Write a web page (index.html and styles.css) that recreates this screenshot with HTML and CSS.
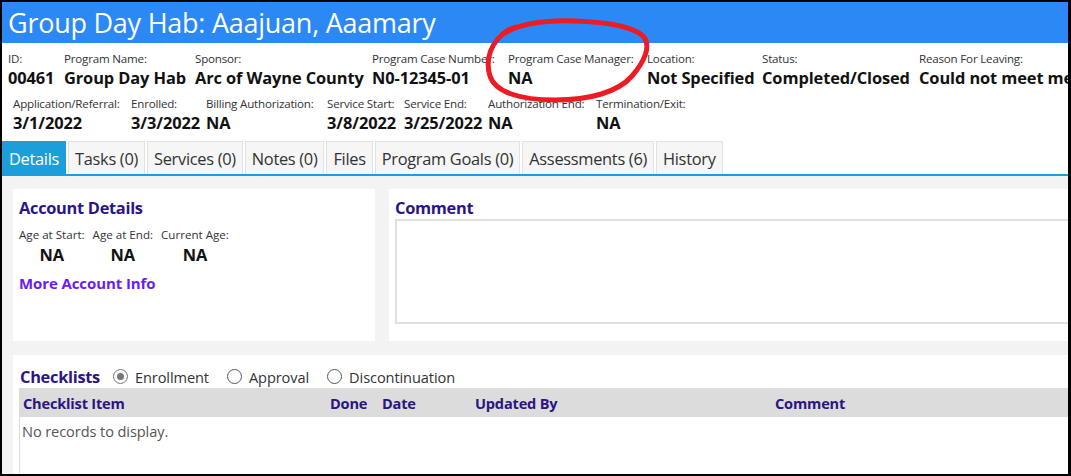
FILE: index.html
```html
<!DOCTYPE html>
<html lang="en">
<head>
<meta charset="utf-8">
<title>Group Day Hab: Aaajuan, Aaamary</title>
<link rel="stylesheet" href="styles.css">
</head>
<body>
<div class="frame">
  <header class="titlebar">
    <h1>Group Day Hab: Aaajuan, Aaamary</h1>
  </header>

  <section class="summary">
    <div class="fields row-a">
      <div class="field"><span class="lbl">ID:</span><span class="val">00461</span></div>
      <div class="field"><span class="lbl">Program Name:</span><span class="val">Group Day Hab</span></div>
      <div class="field"><span class="lbl">Sponsor:</span><span class="val">Arc of Wayne County</span></div>
      <div class="field"><span class="lbl">Program Case Number:</span><span class="val">N0-12345-01</span></div>
      <div class="field"><span class="lbl">Program Case Manager:</span><span class="val">NA</span></div>
      <div class="field"><span class="lbl">Location:</span><span class="val">Not Specified</span></div>
      <div class="field"><span class="lbl">Status:</span><span class="val">Completed/Closed</span></div>
      <div class="field"><span class="lbl">Reason For Leaving:</span><span class="val">Could not meet me</span></div>
    </div>
    <div class="fields row-b">
      <div class="field"><span class="lbl">Application/Referral:</span><span class="val">3/1/2022</span></div>
      <div class="field"><span class="lbl">Enrolled:</span><span class="val">3/3/2022</span></div>
      <div class="field"><span class="lbl">Billing Authorization:</span><span class="val">NA</span></div>
      <div class="field"><span class="lbl">Service Start:</span><span class="val">3/8/2022</span></div>
      <div class="field"><span class="lbl">Service End:</span><span class="val">3/25/2022</span></div>
      <div class="field"><span class="lbl">Authorization End:</span><span class="val">NA</span></div>
      <div class="field"><span class="lbl">Termination/Exit:</span><span class="val">NA</span></div>
    </div>
  </section>

  <nav class="tabs">
    <a class="tab active">Details</a>
    <a class="tab">Tasks (0)</a>
    <a class="tab">Services (0)</a>
    <a class="tab">Notes (0)</a>
    <a class="tab">Files</a>
    <a class="tab">Program Goals (0)</a>
    <a class="tab">Assessments (6)</a>
    <a class="tab">History</a>
  </nav>

  <main class="content">
    <div class="top-panels">
      <section class="panel account">
        <h2 class="panel-title">Account Details</h2>
        <div class="ages">
          <div class="age"><span class="lbl">Age at Start:</span><span class="val">NA</span></div>
          <div class="age"><span class="lbl">Age at End:</span><span class="val">NA</span></div>
          <div class="age"><span class="lbl">Current Age:</span><span class="val">NA</span></div>
        </div>
        <a class="more-link">More Account Info</a>
      </section>
      <section class="panel comment">
        <h2 class="panel-title">Comment</h2>
        <div class="comment-box"></div>
      </section>
    </div>

    <section class="panel checklists">
      <div class="checklist-head">
        <h2 class="panel-title">Checklists</h2>
        <label class="radio checked"><span class="dot"></span>Enrollment</label>
        <label class="radio"><span class="dot"></span>Approval</label>
        <label class="radio"><span class="dot"></span>Discontinuation</label>
      </div>
      <div class="grid">
        <div class="grid-header">
          <span>Checklist Item</span>
          <span>Done</span>
          <span>Date</span>
          <span>Updated By</span>
          <span>Comment</span>
        </div>
        <div class="grid-body">No records to display.</div>
      </div>
    </section>
  </main>

  <!-- hand-drawn marker ring around the case manager field -->
  <svg class="marker" width="1071" height="476" viewBox="0 0 1071 476" aria-hidden="true">
    <path d="M 505 33 C 520 24, 545 20, 575 21 C 605 22, 632 26, 643 36 C 652 46, 644 62, 632 76 C 618 92, 590 100, 555 100 C 520 100, 495 92, 490 76 C 485 60, 490 42, 508 30 L 516 27"
          fill="none" stroke="#ec1c24" stroke-width="5" stroke-linecap="round" stroke-linejoin="round"/>
  </svg>
</div>
</body>
</html>
```

FILE: styles.css
```css
* { box-sizing: border-box; }

html, body {
  margin: 0;
  padding: 0;
  background: #fff;
}

body {
  font-family: "Open Sans", "Noto Sans", sans-serif;
  color: #111;
}

.frame {
  position: relative;
  width: 1071px;
  height: 476px;
  border: 2px solid #000;
  border-right-width: 3px;
  overflow: hidden;
  background: #fff;
}

/* title bar */
.titlebar {
  height: 41px;
  background: #2b88f5;
  padding-left: 6px;
}
.titlebar h1 {
  margin: 0;
  font-weight: 400;
  font-size: 27px;
  line-height: 41px;
  color: #fff;
  white-space: nowrap;
  letter-spacing: -0.25px;
}

/* summary fields */
.summary {
  padding: 8px 0 6px 6px;
}
.fields {
  display: grid;
  white-space: nowrap;
}
.row-a {
  grid-template-columns: 56px 131px 177px 136px 139px 115px 157px auto;
}
.row-b {
  margin-top: 6px;
  padding-left: 5px;
  grid-template-columns: 118px 75px 121px 77px 84px 108px auto;
}
.field {
  display: flex;
  flex-direction: column;
  min-width: 0;
}
.lbl {
  font-size: 11.6px;
  line-height: 15px;
  color: #333;
  letter-spacing: -0.2px;
}
.val {
  font-size: 16.4px;
  line-height: 24px;
  font-weight: 700;
  color: #111;
  letter-spacing: -0.1px;
}

/* tabs */
.tabs {
  display: flex;
  gap: 2px;
  height: 35px;
  border-bottom: 2px solid #1b9ed9;
}
.tab {
  display: block;
  height: 33px;
  padding: 0 6px;
  border: 1px solid #e2e2e2;
  border-bottom: none;
  background: #f6f6f6;
  font-size: 16.4px;
  line-height: 34px;
  color: #333;
  white-space: nowrap;
  letter-spacing: -0.3px;
}
.tab.active {
  background: #1b9ed9;
  border-color: #1b9ed9;
  color: #fff;
}

/* content area */
.content {
  background: #f3f3f3;
  padding: 13px 0 0 11px;
  height: 300px;
}
.top-panels {
  display: flex;
  gap: 14px;
  height: 152px;
}
.panel {
  background: #fff;
}
.panel-title {
  margin: 0;
  font-size: 16.4px;
  line-height: 22px;
  font-weight: 700;
  color: #2b1485;
  letter-spacing: -0.3px;
}

.account {
  width: 362px;
  flex: none;
  padding: 8px 6px;
}
.ages {
  display: flex;
  gap: 8px;
  margin-top: 8px;
}
.age {
  display: flex;
  flex-direction: column;
  align-items: center;
}
.age .lbl {
  letter-spacing: 0;
}
.age .val {
  line-height: 25px;
}
.more-link {
  display: block;
  margin-top: 5px;
  font-size: 15px;
  line-height: 22px;
  font-weight: 700;
  color: #6c1bf2;
  letter-spacing: -0.1px;
}

.comment {
  flex: 1;
  padding: 8px 0 0 6px;
}
.comment-box {
  height: 105px;
  border: 2px solid #e0e0e0;
  border-right: none;
}

/* checklists */
.checklists {
  margin-top: 14px;
  padding: 10px 0 0 6px;
  height: 140px;
}
.checklist-head {
  display: flex;
  align-items: center;
  height: 23px;
  padding-left: 1px;
}
.checklist-head .panel-title {
  margin-right: 13px;
}
.radio {
  display: flex;
  align-items: center;
  gap: 7px;
  margin-right: 18px;
  font-size: 14.6px;
  color: #333;
  letter-spacing: -0.1px;
}
.dot {
  width: 15px;
  height: 15px;
  border-radius: 50%;
  border: 1px solid #555;
  background: #fff;
  position: relative;
}
.radio.checked .dot {
  border-color: #777;
}
.radio.checked .dot::after {
  content: "";
  position: absolute;
  left: 3px;
  top: 3px;
  width: 7px;
  height: 7px;
  border-radius: 50%;
  background: #777;
}

.grid {
  border-left: 1px solid #ddd;
}
.grid-header {
  display: grid;
  grid-template-columns: 307px 52px 93px 300px auto;
  height: 29px;
  align-items: center;
  background: #dcdcdc;
  margin-left: -1px;
  font-size: 14.6px;
  font-weight: 700;
  color: #2b1485;
  letter-spacing: -0.2px;
}
.grid-header span {
  padding-left: 4px;
}
.grid-body {
  padding: 4px 0 0 2px;
  font-size: 14.6px;
  line-height: 20px;
  color: #555;
  height: 80px;
  letter-spacing: -0.1px;
}

/* annotation overlay */
.marker {
  position: absolute;
  left: -2px;
  top: -2px;
  pointer-events: none;
}
```
